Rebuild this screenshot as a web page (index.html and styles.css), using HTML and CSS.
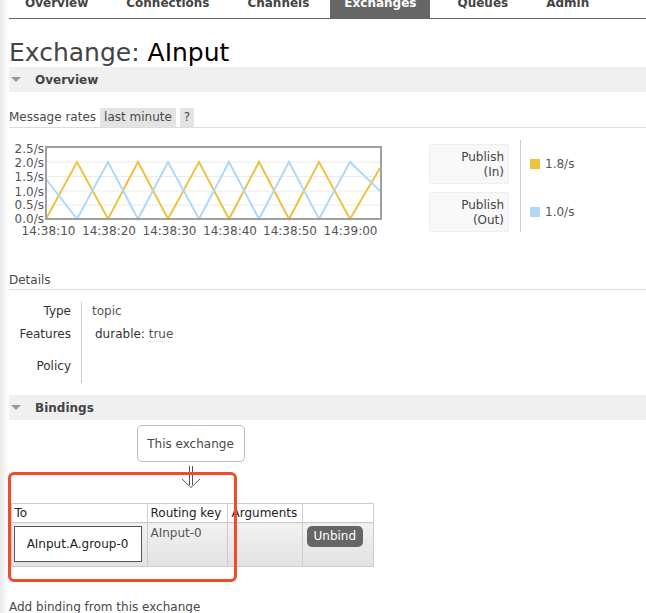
FILE: index.html
```html
<!DOCTYPE html>
<html>
<head>
<meta charset="utf-8">
<link rel="stylesheet" href="styles.css">
</head>
<body>
<div class="page">
  <nav class="menu">
    <a class="tab">Overview</a>
    <a class="tab">Connections</a>
    <a class="tab">Channels</a>
    <a class="tab active">Exchanges</a>
    <a class="tab">Queues</a>
    <a class="tab">Admin</a>
  </nav>

  <h1 class="title">Exchange: <b>AInput</b></h1>

  <div class="section-head"><span class="tri"></span>Overview</div>

  <div class="rates-bar">
    <span>Message rates</span>
    <span class="pill">last minute</span>
    <span class="pill">?</span>
  </div>

  <div class="chart-row">
    <svg class="chart" width="380" height="100" viewBox="0 0 380 100">
      <g class="grid">
        <line x1="37" y1="22" x2="371" y2="22"/>
        <line x1="37" y1="36.5" x2="371" y2="36.5"/>
        <line x1="37" y1="51" x2="371" y2="51"/>
        <line x1="37" y1="65" x2="371" y2="65"/>
      </g>
      <polyline class="s-in" points="37,79 68,22 99,79 129,22 159,79 190,22 220,79 250,22 280,79 310,22 341,79 371,28"/>
      <polyline class="s-out" points="37,39 68,79 99,22 129,79 159,22 190,79 220,22 250,79 280,22 310,79 341,22 371,51"/>
      <rect class="frame" x="37" y="7" width="335" height="72"/>
      <g class="ylab">
        <text x="35" y="12.5">2.5/s</text>
        <text x="35" y="26.5">2.0/s</text>
        <text x="35" y="40.5">1.5/s</text>
        <text x="35" y="55.5">1.0/s</text>
        <text x="35" y="68.5">0.5/s</text>
        <text x="35" y="82.5">0.0/s</text>
      </g>
      <g class="xlab">
        <text x="39.5" y="95">14:38:10</text>
        <text x="100" y="95">14:38:20</text>
        <text x="160.5" y="95">14:38:30</text>
        <text x="221" y="95">14:38:40</text>
        <text x="281" y="95">14:38:50</text>
        <text x="341.5" y="95">14:39:00</text>
      </g>
    </svg>

    <div class="legend">
      <div class="legend-keys">
        <div class="key">Publish<br>(In)</div>
        <div class="key">Publish<br>(Out)</div>
      </div>
      <div class="legend-vals">
        <div class="val"><span class="sw sw-in"></span>1.8/s</div>
        <div class="val"><span class="sw sw-out"></span>1.0/s</div>
      </div>
    </div>
  </div>

  <div class="sub-head">Details</div>

  <div class="facts">
    <div class="fk r1">Type</div><div class="fv r1">topic</div>
    <div class="fk r2">Features</div><div class="fv r2"><span class="feat"><span class="fn">durable:</span> <span class="ft">true</span></span></div>
    <div class="fk r3">Policy</div><div class="fv r3"></div>
  </div>

  <div class="section-head bind-head"><span class="tri"></span>Bindings</div>

  <div class="binding">
    <div class="this-ex">This exchange</div>
    <svg class="arrow" width="20" height="24" viewBox="0 0 20 24">
      <line x1="8.5" y1="1" x2="8.5" y2="20"/>
      <line x1="11.5" y1="1" x2="11.5" y2="20"/>
      <polyline points="1,14 10,22.5 19,14"/>
    </svg>
    <table class="btable">
      <colgroup>
        <col class="w1"><col class="w2"><col class="w3"><col class="w4">
      </colgroup>
      <thead>
        <tr><th>To</th><th>Routing key</th><th class="c3">Arguments</th><th></th></tr>
      </thead>
      <tbody>
        <tr>
          <td class="c1"><div class="dest">AInput.A.group-0</div></td>
          <td>AInput-0</td>
          <td></td>
          <td class="c4"><span class="btn">Unbind</span></td>
        </tr>
      </tbody>
    </table>
  </div>

  <div class="add-bind">Add binding from this exchange</div>

  <div class="annot"></div>
</div>
</body>
</html>
```

FILE: styles.css
```css
html, body {
  margin: 0;
  padding: 0;
}
html {
  background: linear-gradient(90deg, #e8e8e8 0, #fafafa 6px, #ffffff 9px) no-repeat;
  background-color: #fff;
  min-height: 100%;
}
body {
  font-family: "DejaVu Sans", Verdana, sans-serif;
  font-size: 12px;
  color: #484848;
  overflow: hidden;
  height: 613px;
}
.page {
  position: relative;
  padding-left: 9px;
}

/* nav */
.menu {
  display: flex;
  margin-top: -11px;
  height: 29px;
  border-bottom: 1px solid #666;
  padding-left: 0;
}
.tab {
  display: block;
  padding: 0 14px;
  margin-right: 10px;
  line-height: 29px;
  font-weight: bold;
  color: #444;
}
.tab:first-child { margin-left: 2px; }
.tab.active {
  background: #666;
  color: #fff;
  margin-left: -3px;
  margin-right: 13px;
}

/* title */
.title {
  margin: 20px 0 0;
  font-size: 25px;
  font-weight: normal;
  line-height: 28px;
  color: #444;
}
.title b {
  font-weight: normal;
  color: #000;
}

/* section header */
.section-head {
  height: 25px;
  background: #f0f0f0;
  display: flex;
  align-items: center;
  font-weight: bold;
  color: #444;
}
.tri {
  width: 0;
  height: 0;
  border-left: 5px solid transparent;
  border-right: 5px solid transparent;
  border-top: 5px solid #999;
  margin: 0 14px 0 2px;
}

/* rates bar */
.rates-bar {
  margin-top: 16px;
  height: 19px;
  border-bottom: 1px solid #ddd;
  display: flex;
  align-items: stretch;
  gap: 4px;
  line-height: 19px;
}
.pill {
  background: #e4e4e4;
  padding: 0 4px;
}

/* chart */
.chart-row {
  display: flex;
  margin-top: 12px;
  height: 100px;
}
.chart {
  display: block;
  flex: none;
}
.grid line {
  stroke: #ececec;
  stroke-width: 1;
}
.frame {
  fill: none;
  stroke: #a0a0a0;
  stroke-width: 2;
}
.s-in, .s-out {
  fill: none;
  stroke-width: 2;
  stroke-linejoin: miter;
}
.s-in { stroke: #edc240; }
.s-out { stroke: #afd8f8; }
.ylab text {
  font-family: "DejaVu Sans", Verdana, sans-serif;
  font-size: 12px;
  fill: #545454;
  text-anchor: end;
}
.xlab text {
  font-family: "DejaVu Sans", Verdana, sans-serif;
  font-size: 12px;
  fill: #545454;
  text-anchor: middle;
}

.legend {
  display: flex;
  margin-left: 40px;
  height: 92px;
}
.legend-keys {
  display: flex;
  flex-direction: column;
  gap: 8px;
  padding-top: 4px;
  width: 80px;
}
.key {
  height: 40px;
  box-sizing: border-box;
  background: #f8f8f8;
  border: 1px solid #eee;
  border-radius: 3px;
  text-align: right;
  padding: 5px 4px 0 0;
  line-height: 15px;
  color: #444;
}
.legend-vals {
  margin-left: 11px;
  border-left: 1px solid #ccc;
  padding-left: 9px;
  display: flex;
  flex-direction: column;
}
.val {
  height: 24px;
  display: flex;
  align-items: center;
  color: #555;
}
.val:first-child { margin-top: 12px; }
.val:last-child { margin-top: 24px; }
.sw {
  width: 10px;
  height: 10px;
  margin-right: 5px;
}
.sw-in { background: #edc240; }
.sw-out { background: #afd8f8; }

/* details */
.sub-head {
  margin-top: 31px;
  height: 18px;
  line-height: 18px;
  border-bottom: 1px solid #ddd;
}
.facts {
  margin-top: 12px;
  display: grid;
  grid-template-columns: 73px 1fr;
}
.fk {
  text-align: right;
  padding-right: 10px;
  border-right: 1px solid #ccc;
  color: #333;
  display: flex;
  align-items: center;
  justify-content: flex-end;
}
.fv {
  padding-left: 10px;
  display: flex;
  align-items: center;
  color: #555;
}
.r1 { height: 17px; }
.r2 { height: 30px; }
.r3 { height: 34px; }
.feat { padding-left: 3px; }
.fn { color: #333; }
.ft {
  color: #555;
  border-bottom: 1px dotted #ddd;
}

.bind-head {
  margin-top: 12px;
}

/* binding */
.binding {
  width: 362px;
  margin-left: 2px;
  margin-top: 5px;
  display: flex;
  flex-direction: column;
  align-items: center;
}
.this-ex {
  width: 108px;
  height: 37px;
  box-sizing: border-box;
  border: 1px solid #bbb;
  border-radius: 5px;
  display: flex;
  align-items: center;
  justify-content: center;
  margin-left: -3px;
}
.arrow {
  display: block;
  margin-top: 3px;
  margin-left: -2px;
}
.arrow line, .arrow polyline {
  stroke: #555;
  stroke-width: 1;
  fill: none;
}
.btable {
  margin-top: 14px;
  border-collapse: collapse;
  width: 362px;
  table-layout: fixed;
}
.w1 { width: 136px; }
.w2 { width: 80px; }
.w3 { width: 75px; }
.w4 { width: 71px; }
.btable th, .btable td {
  border: 1px solid #ccc;
  text-align: left;
  vertical-align: top;
  padding: 0 3px;
  overflow: visible;
  white-space: nowrap;
}
.btable th {
  font-weight: normal;
  color: #222;
  height: 18px;
  line-height: 18px;
  background: #fff;
}
.btable th.c3 { padding-left: 4px; }
.btable td {
  height: 44px;
  box-sizing: border-box;
  background: linear-gradient(#f2f2f2, #e2e2e2);
  color: #555;
  padding-top: 3px;
  line-height: 15px;
}
.btable td.c1 { padding: 3px 3px 3px 2px; }
.dest {
  width: 128px;
  height: 36px;
  box-sizing: border-box;
  border: 1px solid #555;
  background: #fff;
  color: #222;
  display: flex;
  align-items: center;
  justify-content: center;
}
.btable td.c4 { padding-left: 4px; }
.btn {
  display: inline-block;
  background: #666;
  color: #fff;
  border-radius: 5px;
  padding: 0 7px;
  height: 21px;
  line-height: 21px;
}

.add-bind {
  margin-top: 33px;
  line-height: 15px;
}

.annot {
  position: absolute;
  left: 8px;
  top: 483px;
  width: 229px;
  height: 110px;
  box-sizing: border-box;
  border: 3px solid #f24b2b;
  border-radius: 6px;
}
```
